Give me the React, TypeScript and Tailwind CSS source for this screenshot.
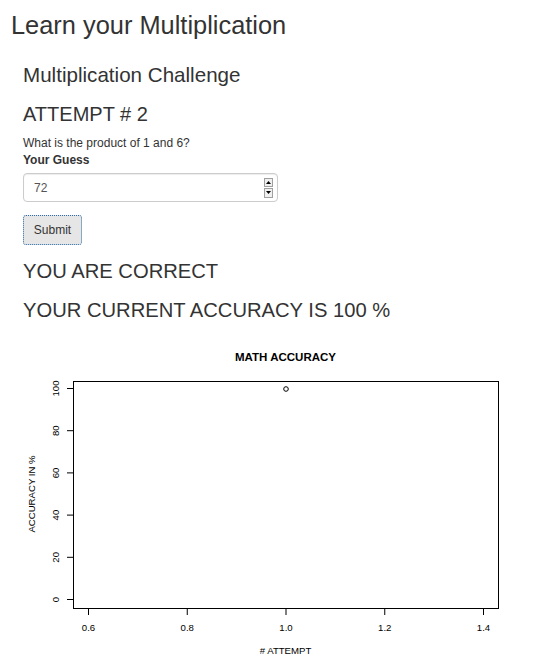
const yTicks = [100, 80, 60, 40, 20, 0];
const xTicks = ["0.6", "0.8", "1.0", "1.2", "1.4"];

function yPos(v: number) {
  return 259 - v * 2.11;
}

function xPos(i: number) {
  return 88 + i * 98.75;
}

function AccuracyPlot() {
  return (
    <svg width={540} height={322} className="block" style={{ fontFamily: '"Liberation Sans", Arial, sans-serif' }}>
      <text x={285.5} y={21} textAnchor="middle" fontSize={11.5} fontWeight="bold" fill="#000">
        MATH ACCURACY
      </text>
      <rect x={73.5} y={41.5} width={425} height={227} fill="none" stroke="#000" strokeWidth={1} />
      {yTicks.map((v) => (
        <g key={v}>
          <line x1={67} x2={73.5} y1={yPos(v) + 0.5} y2={yPos(v) + 0.5} stroke="#000" />
          <text
            x={59}
            y={yPos(v) + 0.5}
            fontSize={9.6}
            textAnchor="middle"
            transform={`rotate(-90 59 ${yPos(v) + 0.5})`}
            fill="#000"
          >
            {v}
          </text>
        </g>
      ))}
      {xTicks.map((t, i) => (
        <g key={t}>
          <line x1={xPos(i) + 0.5} x2={xPos(i) + 0.5} y1={268.5} y2={275} stroke="#000" />
          <text x={xPos(i) + 0.5} y={291} fontSize={9.6} textAnchor="middle" fill="#000">
            {t}
          </text>
        </g>
      ))}
      <text x={285.5} y={314} fontSize={9.6} textAnchor="middle" fill="#000">
        # ATTEMPT
      </text>
      <text x={35} y={154} fontSize={9.6} textAnchor="middle" transform="rotate(-90 35 154)" fill="#000">
        ACCURACY IN %
      </text>
      <circle cx={286} cy={49} r={2.3} fill="none" stroke="#000" strokeWidth={1} />
    </svg>
  );
}

export default function App() {
  return (
    <div className="bg-white text-[#333] min-h-[662px]" style={{ fontFamily: '"Liberation Sans", Arial, sans-serif' }}>
      <h2 className="pl-[11px] pt-[9px] text-[25.4px] leading-[32px]">Learn your Multiplication</h2>
      <div className="pl-[23px]">
        <h4 className="mt-[22px] text-[20.6px] leading-[24px]">Multiplication Challenge</h4>
        <h4 className="mt-[15px] text-[20px] leading-[24px]">ATTEMPT # 2</h4>
        <p className="mt-[9px] text-[12px] leading-[16px]">What is the product of 1 and 6?</p>
        <label className="block mt-[1px] text-[12px] leading-[16px] font-bold">Your Guess</label>
        <div className="mt-[5px] w-[255px] h-[29px] border border-[#ccc] rounded-[4px] flex items-center pl-[10px] pr-[4px] shadow-[inset_0_1px_1px_rgba(0,0,0,0.075)]">
          <span className="flex-1 text-[12px] text-[#555]">72</span>
          <div className="flex flex-col w-[9px] h-[20px] gap-[1px]">
            <div className="flex-1 flex items-center justify-center border border-[#a0a0a0] bg-[#f0f0f0]">
              <svg width={5} height={3} viewBox="0 0 5 3">
                <path d="M2.5 0 L5 3 L0 3 Z" fill="#000" />
              </svg>
            </div>
            <div className="flex-1 flex items-center justify-center border border-[#a0a0a0] bg-[#f0f0f0]">
              <svg width={5} height={3} viewBox="0 0 5 3">
                <path d="M0 0 L5 0 L2.5 3 Z" fill="#000" />
              </svg>
            </div>
          </div>
        </div>
        <button className="block mt-[13px] w-[59px] h-[30px] bg-[#e6e6e6] rounded-[3px] border border-dotted border-[#2a6aa8] text-[12px] text-[#333]">
          Submit
        </button>
        <h4 className="mt-[14px] text-[20.2px] leading-[24px]">YOU ARE CORRECT</h4>
        <h4 className="mt-[15px] text-[20.2px] leading-[24px]">YOUR CURRENT ACCURACY IS 100 %</h4>
      </div>
      <div className="mt-[18px]">
        <AccuracyPlot />
      </div>
    </div>
  );
}
